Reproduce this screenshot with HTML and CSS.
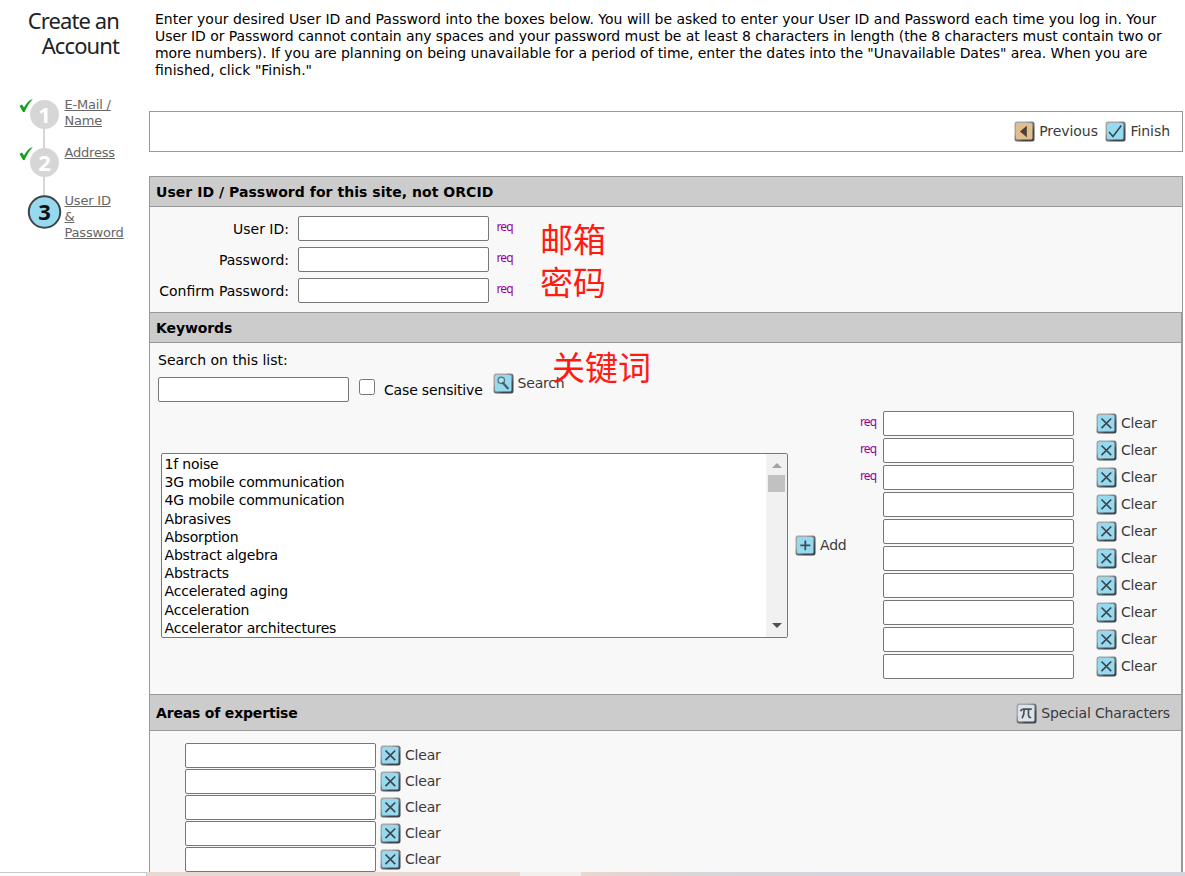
FILE: index.html
```html
<!DOCTYPE html>
<html lang="en">
<head>
    <meta charset="UTF-8">
    <meta name="viewport" content="width=device-width, initial-scale=1.0">
    <title>Create an Account</title>
    <link rel="stylesheet" href="styles.css">
</head>
<body>
    <!-- Icons -->
    <svg width="0" height="0" class="sprites">
        <defs>
            <linearGradient id="shade" x1="0" y1="0" x2="1" y2="1">
                <stop offset="0.3" stop-color="#a3a8aa"/>
                <stop offset="0.7" stop-color="#3f474b"/>
            </linearGradient>
            <symbol id="box" viewBox="0 0 21 21">
                <rect x="0.5" y="0.5" width="20" height="20" rx="2.5" fill="url(#shade)"/>
                <rect x="2" y="2" width="16.5" height="16.5" rx="1.5" fill="currentColor"/>
            </symbol>
            <symbol id="clear" viewBox="0 0 21 21">
                <use href="#box"/>
                <path d="M5.5 5.5L15.2 15.2M15.2 5.5L5.5 15.2" stroke="#3b484e" stroke-width="1.7" fill="none"/>
            </symbol>
            <symbol id="add" viewBox="0 0 21 21">
                <use href="#box"/>
                <path d="M10.3 5.5V15.3M5.3 10.4H15.3" stroke="#3b5058" stroke-width="1.8" fill="none"/>
            </symbol>
            <symbol id="finish" viewBox="0 0 21 21">
                <use href="#box"/>
                <path d="M4 11L8 15.5L16.3 4.5" stroke="#37444a" stroke-width="1.5" fill="none"/>
            </symbol>
            <symbol id="previous" viewBox="0 0 21 21">
                <use href="#box"/>
                <path d="M6 10.5L12.8 4.8V16.2Z" fill="#4d4032"/>
            </symbol>
            <symbol id="search" viewBox="0 0 21 21">
                <use href="#box"/>
                <circle cx="8.3" cy="7.3" r="3.2" fill="#b2e2f0" stroke="#53707c" stroke-width="1.3"/>
                <path d="M10 10L14.7 15.3" stroke="#46606b" stroke-width="2.4" stroke-linecap="round"/>
            </symbol>
            <symbol id="special" viewBox="0 0 21 21">
                <use href="#box"/>
                <path d="M4.5 8.2C5.3 6.2 6 6.2 7.3 6.2H15.8M8.2 6.5C8.2 10 7.6 13 6 15.3M12.6 6.5C12.2 11 12 15.8 15.2 14.2" stroke="#4b5054" stroke-width="1.7" fill="none"/>
            </symbol>
        </defs>
    </svg>

    <div class="page">
        <div class="sidebar">
            <h1>Create an<br>Account</h1>
            <div class="steps">
                <svg class="track" width="44" height="136" viewBox="0 0 44 136">
                    <path d="M25 20V110" stroke="#d6d6d6" stroke-width="2"/>
                    <circle cx="25.5" cy="18.5" r="14.5" fill="#d6d6d6"/>
                    <circle cx="25.5" cy="66.5" r="14.5" fill="#d6d6d6"/>
                    <circle cx="25.5" cy="116" r="15.7" fill="#97d9ee" stroke="#3c4447" stroke-width="2"/>
                    <path d="M0.5 10L3 8.5L5 11.5C7.5 7 10 4 13.8 3C10.5 6.5 8 10.5 5.6 16L4 16Z" fill="#13a01a"/>
                    <path d="M0.5 58L3 56.5L5 59.5C7.5 55 10 52 13.8 51C10.5 54.5 8 58.5 5.6 64L4 64Z" fill="#13a01a"/>
                    <text x="25.5" y="26.5" class="num done">1</text>
                    <text x="25.5" y="74.5" class="num done">2</text>
                    <text x="25.5" y="124" class="num">3</text>
                </svg>
                <ul>
                    <li><a>E-Mail /<br>Name</a></li>
                    <li><a>Address</a></li>
                    <li><a>User ID<br>&amp;<br>Password</a></li>
                </ul>
            </div>
        </div>

        <div class="content">
            <p class="intro">
                Enter your desired User ID and Password into the boxes below. You will be asked to enter your User ID and Password each time you log in. Your<br>
                <span class="tight">User ID or Password cannot contain any spaces and your password must be at least 8 characters in length (the 8 characters must contain two or<br>
                more numbers). If you are planning on being unavailable for a period of time, enter the dates into the "Unavailable Dates" area. When you are</span><br>
                finished, click "Finish."
            </p>

            <div class="navbar">
                <a class="btn tan"><svg><use href="#previous"/></svg>Previous</a>
                <a class="btn"><svg><use href="#finish"/></svg>Finish</a>
            </div>

            <div class="panel">
                <h2>User ID / Password for this site, not ORCID</h2>
                <div class="login">
                    <div class="row"><label for="user">User ID:</label><input id="user" type="text"><span class="req">req</span></div>
                    <div class="row"><label for="pass">Password:</label><input id="pass" type="password"><span class="req">req</span></div>
                    <div class="row"><label for="confirm">Confirm Password:</label><input id="confirm" type="password"><span class="req">req</span></div>
                    <div class="note note-login">邮箱<br>密码</div>
                </div>
            </div>

            <div class="panel wide">
                <h2>Keywords</h2>
                <div class="keywords">
                    <label class="search-label" for="find">Search on this list:</label>
                    <div class="search">
                        <input id="find" type="text">
                        <input type="checkbox" id="case">
                        <label for="case">Case sensitive</label>
                        <a class="btn"><svg><use href="#search"/></svg>Search</a>
                    </div>
                    <div class="note note-keywords">关键词</div>
                    <div class="picker">
                        <div class="list">
                            <ul>
                                <li>1f noise</li>
                                <li>3G mobile communication</li>
                                <li>4G mobile communication</li>
                                <li>Abrasives</li>
                                <li>Absorption</li>
                                <li>Abstract algebra</li>
                                <li>Abstracts</li>
                                <li>Accelerated aging</li>
                                <li>Acceleration</li>
                                <li>Accelerator architectures</li>
                            </ul>
                            <div class="scrollbar">
                                <svg width="10" height="5"><path d="M0 5L5 0L10 5Z" fill="#a3a3a3"/></svg>
                                <div class="thumb"></div>
                                <svg class="down" width="10" height="5"><path d="M0 0H10L5 5Z" fill="#505050"/></svg>
                            </div>
                        </div>
                        <a class="btn add"><svg><use href="#add"/></svg>Add</a>
                        <div class="chosen">
                            <div class="row"><span class="req">req</span><input type="text"><a class="btn"><svg><use href="#clear"/></svg>Clear</a></div>
                            <div class="row"><span class="req">req</span><input type="text"><a class="btn"><svg><use href="#clear"/></svg>Clear</a></div>
                            <div class="row"><span class="req">req</span><input type="text"><a class="btn"><svg><use href="#clear"/></svg>Clear</a></div>
                            <div class="row"><span class="req"></span><input type="text"><a class="btn"><svg><use href="#clear"/></svg>Clear</a></div>
                            <div class="row"><span class="req"></span><input type="text"><a class="btn"><svg><use href="#clear"/></svg>Clear</a></div>
                            <div class="row"><span class="req"></span><input type="text"><a class="btn"><svg><use href="#clear"/></svg>Clear</a></div>
                            <div class="row"><span class="req"></span><input type="text"><a class="btn"><svg><use href="#clear"/></svg>Clear</a></div>
                            <div class="row"><span class="req"></span><input type="text"><a class="btn"><svg><use href="#clear"/></svg>Clear</a></div>
                            <div class="row"><span class="req"></span><input type="text"><a class="btn"><svg><use href="#clear"/></svg>Clear</a></div>
                            <div class="row"><span class="req"></span><input type="text"><a class="btn"><svg><use href="#clear"/></svg>Clear</a></div>
                        </div>
                    </div>
                </div>
            </div>

            <div class="panel wide">
                <h2 class="tall">Areas of expertise <a class="btn grey"><svg><use href="#special"/></svg>Special Characters</a></h2>
                <div class="areas">
                    <div class="row"><input type="text"><a class="btn"><svg><use href="#clear"/></svg>Clear</a></div>
                    <div class="row"><input type="text"><a class="btn"><svg><use href="#clear"/></svg>Clear</a></div>
                    <div class="row"><input type="text"><a class="btn"><svg><use href="#clear"/></svg>Clear</a></div>
                    <div class="row"><input type="text"><a class="btn"><svg><use href="#clear"/></svg>Clear</a></div>
                    <div class="row"><input type="text"><a class="btn"><svg><use href="#clear"/></svg>Clear</a></div>
                </div>
            </div>
        </div>
    </div>
    <div class="footer">
        <div class="status"></div>
        <div class="strip"></div>
    </div>
</body>
</html>
```
FILE: styles.css
```css
* {
    box-sizing: border-box;
}

body {
    margin: 0;
    height: 876px;
    overflow: hidden;
    background-color: #fff;
    font-family: Verdana, "DejaVu Sans", sans-serif;
    font-size: 14px;
    line-height: 17px;
    color: #000;
}

.sprites {
    display: block;
}

ul {
    list-style: none;
    margin: 0;
    padding: 0;
}

.page {
    display: flex;
    height: 872px;
    overflow: hidden;
}

/* left column */
.sidebar {
    width: 149px;
    flex: none;
    padding-top: 8px;
}

h1 {
    margin: 0;
    padding-right: 30px;
    text-align: right;
    font: 400 22px/25px "Noto Sans", sans-serif;
    letter-spacing: -0.9px;
    color: #222;
}

.steps {
    display: flex;
    padding: 38px 0 0 19px;
}

.track {
    flex: none;
}

.num {
    font: 700 22px "Noto Sans", sans-serif;
    text-anchor: middle;
    fill: #111;
}

.done {
    fill: #fff;
}

.steps ul {
    padding: 1px 0 0 1.5px;
    font-size: 13px;
    line-height: 16px;
    color: #666;
    text-decoration: underline;
    letter-spacing: -0.2px;
}

.steps li {
    height: 48px;
}

/* right column */
.content {
    width: 1034px;
    flex: none;
}

.intro {
    margin: 0;
    padding: 11px 0 0 6px;
    height: 111px;
    white-space: nowrap;
}

.tight {
    letter-spacing: -0.068px;
}

.navbar {
    display: flex;
    justify-content: flex-end;
    align-items: center;
    gap: 7.5px;
    height: 41px;
    padding-right: 12px;
    margin-bottom: 24px;
    border: 1px solid #999;
}

.btn {
    display: inline-flex;
    align-items: center;
    gap: 4px;
    color: #3a3a3a;
    font-weight: 400;
    font-size: 14px;
    letter-spacing: -0.2px;
}

.navbar .btn {
    letter-spacing: -0.05px;
}

.btn svg {
    width: 21px;
    height: 21px;
    flex: none;
    color: #97d9ee;
}

.tan svg {
    color: #e2bd8e;
}

.grey svg {
    color: #dde3ea;
}

.panel {
    border: 1px solid #999;
    border-bottom: none;
    background-color: #f8f8f8;
}

.wide {
    border-right-width: 2px;
}

h2 {
    display: flex;
    align-items: center;
    justify-content: space-between;
    margin: 0;
    height: 30px;
    padding: 1px 11px 0 6px;
    border-bottom: 1px solid #999;
    background-color: #ccc;
    font-size: 14px;
    letter-spacing: 0.04px;
}

.tall {
    height: 36px;
    letter-spacing: -0.18px;
}

.tall .btn {
    letter-spacing: -0.14px;
}

.wide h2:not(.tall) {
    letter-spacing: -0.1px;
}

input[type=text],
input[type=password] {
    width: 191px;
    height: 25px;
    margin: 0;
    border: 1px solid #767676;
    border-radius: 2px;
    background-color: #fff;
}

.row {
    display: flex;
}

.req {
    font: 12px/14px "Noto Sans", sans-serif;
    letter-spacing: -0.9px;
    color: #990099;
}

.note {
    position: absolute;
    font: 33px/43px "Noto Sans CJK SC", sans-serif;
    color: #ff1a12;
}

/* user id / password */
.login {
    position: relative;
    height: 105px;
    padding-top: 9px;
}

.login .row {
    height: 31px;
}

.login label {
    width: 139px;
    padding-top: 5px;
    margin-right: 9px;
    text-align: right;
}

.login .req {
    padding: 4px 0 0 7.5px;
}

.note-login {
    left: 390px;
    top: 10px;
}

/* keywords */
.keywords {
    position: relative;
    height: 351px;
    padding-top: 9px;
}

.search-label {
    display: block;
    padding-left: 8px;
}

.search {
    display: flex;
    align-items: flex-start;
    height: 42px;
    padding: 8px 0 0 8px;
}

#case {
    width: 16px;
    height: 16px;
    margin: 2px 9px 0 10px;
}

.search label {
    padding-top: 5px;
    letter-spacing: -0.17px;
}

.search .btn {
    margin: -4px 0 0 10px;
}

.note-keywords {
    left: 402px;
    top: 2px;
}

.picker {
    display: flex;
    padding-left: 11px;
}

.list {
    display: flex;
    width: 627px;
    height: 185px;
    margin-top: 42px;
    border: 1px solid #767676;
    border-radius: 2px;
    background-color: #fff;
}

.list ul {
    flex: 1;
    padding: 1px 0 0 2.5px;
    line-height: 18.2px;
    letter-spacing: -0.19px;
}

.scrollbar {
    display: flex;
    flex-direction: column;
    align-items: center;
    width: 21px;
    padding: 9px 0;
    background-color: #f1f1f1;
}

.thumb {
    width: 17px;
    height: 17px;
    margin-top: 7px;
    background-color: #c1c1c1;
}

.down {
    margin-top: auto;
}

.add {
    align-self: flex-start;
    width: 65px;
    margin: 124px 0 0 7px;
}

.chosen .row {
    height: 27px;
}

.chosen .req {
    width: 23px;
    padding-top: 4px;
}

.chosen .btn {
    height: 25px;
    margin-left: 22px;
}

/* areas of expertise */
.areas {
    height: 160px;
    padding: 12px 0 0 35px;
}

.areas .row {
    height: 26px;
}

.areas .btn {
    height: 25px;
    margin-left: 4px;
}

/* bottom edge */
.footer {
    display: flex;
    height: 4px;
}

.status {
    width: 147px;
    border-top: 1px solid #c8c8c8;
    border-right: 1px solid #c8c8c8;
}

.strip {
    flex: 1;
    background: linear-gradient(to right, #e9dad1 373px, #f4efea 373px, #f4efea 434px, #e9d8ce 434px, #e6d5cf 480px, #d8d6d8 540px, #d3d4de 720px);
}
```
